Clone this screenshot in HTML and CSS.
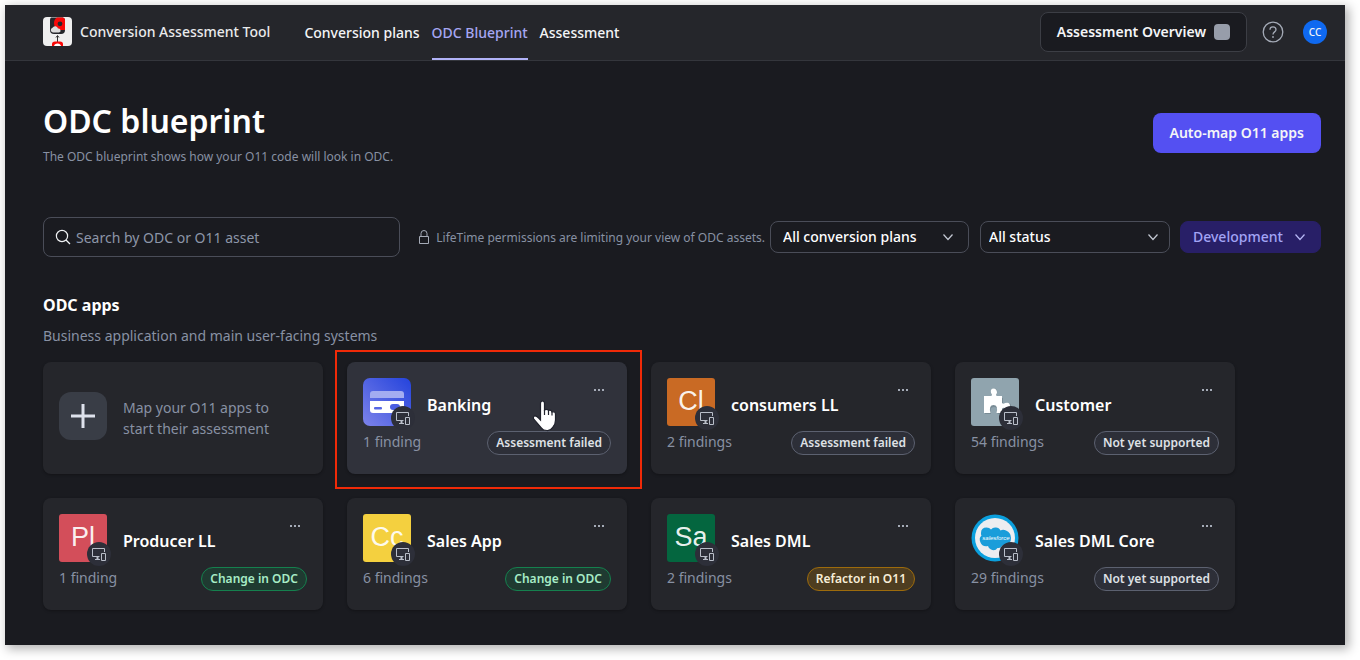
FILE: index.html
```html
<!DOCTYPE html>
<html lang="en">
<head>
<meta charset="utf-8">
<meta name="viewport" content="width=device-width, initial-scale=1">
<title>ODC blueprint</title>
<link rel="stylesheet" href="styles.css">
</head>
<body>
<svg class="sprite" aria-hidden="true">
  <symbol id="devices" viewBox="0 0 24 24">
    <path d="M12.500 14.500H5.500V6.500H17.500V10M8 17.500H13M14.500 11.500H18.500V18.500H14.500Z" fill="none" stroke="#b9bec9" stroke-width="1"/>
    <path d="M9.500 15H11.500V17H9.500Z" fill="#b9bec9"/>
  </symbol>
  <symbol id="chevron" viewBox="0 0 12 12">
    <path d="M1.500 3.500L6 8.500L10.500 3.500" fill="none" stroke="currentColor" stroke-width="1.200"/>
  </symbol>
</svg>
<div class="window">
  <header class="topbar">
    <a class="brand" href="#">
      <svg class="brand-logo" viewBox="0 0 29 29" aria-hidden="true">
        <rect width="29" height="29" rx="4" fill="#efefef"/>
        <path d="M8 .5H20Q22 1 22 3V13Q22 17 18 17H11Q7 17 7 13V3Q7 1 8 .5Z" fill="#25262b"/>
        <path d="M14 .5H20Q22 1 22 3V13H17Q11 12 11 6Q11 2 14 .5Z" fill="#f80808"/>
        <circle cx="17" cy="6.800" r="2.400" fill="#25262b"/>
        <path d="M10 15.500a2.400 2.400 0 0 1-.5-4.700a3 3 0 0 1 5.500 .7a2 2 0 0 1 1 4Z" fill="#dcdcdc"/>
        <path d="M14.500 25V19M13 20.500L14.500 18.500L16 20.500" fill="none" stroke="#333" stroke-width="1"/>
        <path d="M9 29V27Q9 24.500 12 24.500H17Q20 24.500 20 27V29Z" fill="#f80808"/>
        <path d="M11 29Q11.500 26.500 14.500 26.500T18 29Z" fill="#fff"/>
      </svg>
      <span>Conversion Assessment Tool</span>
    </a>
    <nav class="nav">
      <a href="#">Conversion plans</a>
      <a href="#" class="active" aria-current="page">ODC Blueprint</a>
      <a href="#">Assessment</a>
    </nav>
    <div class="tools">
      <button class="overview" type="button">Assessment Overview <span class="overview-mark"></span></button>
      <button class="help" type="button" aria-label="Help">
        <svg viewBox="0 0 22 22" aria-hidden="true">
          <circle cx="11" cy="11" r="9.800" fill="none" stroke="#a5abb7" stroke-width="1.300"/>
          <path d="M8 8.700C8 4.800 14 4.800 14 8.700C14 10.900 11 10.900 11 13.500" fill="none" stroke="#a5abb7" stroke-width="1.300"/>
          <circle cx="11" cy="16" r="0.900" fill="#a5abb7"/>
        </svg>
      </button>
      <button class="avatar" type="button">CC</button>
    </div>
  </header>

  <main class="page">
    <div class="heading">
      <div>
        <h1>ODC blueprint</h1>
        <p class="lead">The ODC blueprint shows how your O11 code will look in ODC.</p>
      </div>
      <button class="primary" type="button">Auto-map O11 apps</button>
    </div>

    <div class="filters">
      <label class="search">
        <svg viewBox="0 0 16 16" aria-hidden="true"><circle cx="7" cy="7" r="5.600" fill="none" stroke="#f1f3f5" stroke-width="1.200"/><path d="M11 11L15 15" stroke="#f1f3f5" stroke-width="1.300"/></svg>
        <input type="text" placeholder="Search by ODC or O11 asset" aria-label="Search by ODC or O11 asset">
      </label>
      <p class="notice">
        <svg viewBox="0 0 12 16" aria-hidden="true"><path d="M1.500 7.500H10.500V14.500H1.500ZM3 7.500V4.500Q3 1.500 6 1.500T9 4.500V7.500" fill="none" stroke="#a5abb7" stroke-width="1"/></svg>
        LifeTime permissions are limiting your view of ODC assets.
      </p>
      <div class="picker picker-plans">
        <select aria-label="Conversion plan"><option>All conversion plans</option></select>
        <svg aria-hidden="true"><use href="#chevron"/></svg>
      </div>
      <div class="picker picker-status">
        <select aria-label="Status"><option>All status</option></select>
        <svg aria-hidden="true"><use href="#chevron"/></svg>
      </div>
      <div class="picker picker-stage">
        <select aria-label="Stage"><option>Development</option></select>
        <svg aria-hidden="true"><use href="#chevron"/></svg>
      </div>
    </div>

    <h2>ODC apps</h2>
    <p class="section-note">Business application and main user-facing systems</p>

    <div class="cards">
      <button class="card card-add" type="button">
        <span class="plus"><svg viewBox="0 0 24 24" aria-hidden="true"><path d="M12 0V24M0 12H24" stroke="#dee2ec" stroke-width="3"/></svg></span>
        <span class="add-text">Map your O11 apps to start their assessment</span>
      </button>

      <article class="card card-hover">
        <div class="card-top">
          <div class="app-icon">
            <svg class="tile" viewBox="0 0 48 48" aria-hidden="true">
              <defs><linearGradient id="bank" x1="0" y1="1" x2="1" y2="0"><stop offset="0" stop-color="#7d83ea"/><stop offset="1" stop-color="#2443dc"/></linearGradient></defs>
              <rect width="48" height="48" rx="7" fill="url(#bank)"/>
              <path d="M7 20V16Q7 13 10 13H38Q41 13 41 16V20Z" fill="#a3acf1"/>
              <path d="M7 23H41V32Q41 35 38 35H10Q7 35 7 32Z" fill="#fff"/>
              <rect x="11" y="29" width="8" height="2.500" rx="1" fill="#5667e4"/>
              <rect x="27" y="26" width="10" height="6" rx="3" fill="#4a5ee2"/>
            </svg>
            <span class="badge"><svg aria-hidden="true"><use href="#devices"/></svg></span>
          </div>
          <h3>Banking</h3>
          <button class="more" type="button" aria-label="More actions for Banking"><i></i><i></i><i></i></button>
        </div>
        <div class="card-bottom"><span>1 finding</span><span class="status">Assessment failed</span></div>
        <span class="callout"></span>
        <svg class="pointer" viewBox="0 0 26 32" aria-hidden="true">
          <path d="M8.500 3.500Q8.500 1 10.500 1T12.500 3.500V10Q15 8.500 16.500 10.500Q19 9.500 20 12Q23.500 11 23.500 14.500V20Q23.500 24 21 27Q18 31 15 30.500Q11 30.500 9.500 28L2 19.500Q.5 17 2.500 16Q4.500 15.500 8.500 20Z" fill="#fff" stroke="#20222c" stroke-width="1.200"/>
          <path d="M12.500 10V15M16.500 10.500V15M20 12V15.500" stroke="#20222c" stroke-width="1.200"/>
        </svg>
      </article>

      <article class="card">
        <div class="card-top">
          <div class="app-icon">
            <span class="tile letters orange">Cl</span>
            <span class="badge"><svg aria-hidden="true"><use href="#devices"/></svg></span>
          </div>
          <h3>consumers LL</h3>
          <button class="more" type="button" aria-label="More actions for consumers LL"><i></i><i></i><i></i></button>
        </div>
        <div class="card-bottom"><span>2 findings</span><span class="status">Assessment failed</span></div>
      </article>

      <article class="card">
        <div class="card-top">
          <div class="app-icon">
            <svg class="tile" viewBox="0 0 48 48" aria-hidden="true">
              <rect width="48" height="48" rx="3" fill="#90a4ae"/>
              <path d="M14 20H20.500Q21.500 17 20 15.500Q19 10.500 23 10.500T26 15.500Q24.500 17 25.500 20H32V26Q33 27.500 35 25.500Q40 24 40 28T35 31Q33 29.500 32 31V36H26.500Q28 29 23 29T20 36H14Z" fill="#788b95"/>
              <path d="M13 18H20.500Q21.500 16.500 20 15Q19 10.500 22.500 10.500T26 15Q24.500 16.500 25.500 18H31V25Q32.500 26.500 34 25Q39 23.500 39 28T34 30.500Q32 29 31 31V35H25.500Q27.500 27 22.500 27T19.500 35H13Z" fill="#fff"/>
            </svg>
            <span class="badge"><svg aria-hidden="true"><use href="#devices"/></svg></span>
          </div>
          <h3>Customer</h3>
          <button class="more" type="button" aria-label="More actions for Customer"><i></i><i></i><i></i></button>
        </div>
        <div class="card-bottom"><span>54 findings</span><span class="status">Not yet supported</span></div>
      </article>

      <article class="card">
        <div class="card-top">
          <div class="app-icon">
            <span class="tile letters red">Pl</span>
            <span class="badge"><svg aria-hidden="true"><use href="#devices"/></svg></span>
          </div>
          <h3>Producer LL</h3>
          <button class="more" type="button" aria-label="More actions for Producer LL"><i></i><i></i><i></i></button>
        </div>
        <div class="card-bottom"><span>1 finding</span><span class="status status-change">Change in ODC</span></div>
      </article>

      <article class="card">
        <div class="card-top">
          <div class="app-icon">
            <span class="tile letters yellow">Cc</span>
            <span class="badge"><svg aria-hidden="true"><use href="#devices"/></svg></span>
          </div>
          <h3>Sales App</h3>
          <button class="more" type="button" aria-label="More actions for Sales App"><i></i><i></i><i></i></button>
        </div>
        <div class="card-bottom"><span>6 findings</span><span class="status status-change">Change in ODC</span></div>
      </article>

      <article class="card">
        <div class="card-top">
          <div class="app-icon">
            <span class="tile letters green">Sa</span>
            <span class="badge"><svg aria-hidden="true"><use href="#devices"/></svg></span>
          </div>
          <h3>Sales DML</h3>
          <button class="more" type="button" aria-label="More actions for Sales DML"><i></i><i></i><i></i></button>
        </div>
        <div class="card-bottom"><span>2 findings</span><span class="status status-refactor">Refactor in O11</span></div>
      </article>

      <article class="card">
        <div class="card-top">
          <div class="app-icon">
            <svg class="tile" viewBox="0 0 48 48" aria-hidden="true">
              <circle cx="24" cy="24" r="23.500" fill="#0b9fdd"/>
              <circle cx="24" cy="24" r="20" fill="#ededf0"/>
              <path d="M10 19Q10 13.500 15.500 13.500Q18.500 13.500 20 15.500Q22 13 25 13.500Q28 13.500 29.500 16.500Q32 15 35 16.500Q40 18.500 40 24T35 31Q33.500 32 31.500 31.500Q30 34.500 26.500 34Q24 37.500 20 35.500Q17.500 34.500 17 32Q11 33 9.500 28.500Q7.500 24 10.500 21.500Q9.800 20.500 10 19Z" fill="#1a9dda"/>
              <text x="25" y="26" text-anchor="middle" class="cloud-text">salesforce</text>
            </svg>
            <span class="badge"><svg aria-hidden="true"><use href="#devices"/></svg></span>
          </div>
          <h3>Sales DML Core</h3>
          <button class="more" type="button" aria-label="More actions for Sales DML Core"><i></i><i></i><i></i></button>
        </div>
        <div class="card-bottom"><span>29 findings</span><span class="status">Not yet supported</span></div>
      </article>
    </div>
  </main>
</div>
</body>
</html>
```
FILE: styles.css
```css
* { box-sizing: border-box; }

body {
  margin: 0;
  padding: 5px 15px 15px 5px;
  background: #fff;
  color: #f4f5f7;
  font: 14px/21px "Noto Sans", sans-serif;
}

h1, h2, h3, p { margin: 0; }
a { color: inherit; text-decoration: none; }
button, input, select { font: inherit; color: inherit; }
button { border: 0; padding: 0; background: none; cursor: pointer; }
svg { display: block; flex: none; }
.sprite { position: absolute; width: 0; height: 0; }

.window {
  min-height: calc(100vh - 20px);
  background: #1a1b20;
  box-shadow: 3px 3px 10px 1px rgba(0, 0, 0, 0.3);
}

/* Top bar */
.topbar {
  display: flex;
  align-items: stretch;
  height: 56px;
  padding: 0 18px 0 38px;
  border-bottom: 1px solid #34363c;
  background: #25262b;
  font-weight: 500;
}
.brand { display: flex; align-items: center; gap: 8px; margin-right: 34px; padding-bottom: 2px; color: #e9eaec; }
.brand-logo { width: 29px; height: 29px; }
.nav { display: flex; gap: 12px; }
.nav a { display: flex; align-items: center; border-bottom: 2px solid transparent; border-top: 2px solid transparent; }
.nav .active { color: #a6a7f3; border-bottom-color: #b1b2f7; }
.tools { display: flex; align-items: center; margin-left: auto; padding-bottom: 2px; }
.overview {
  display: flex;
  align-items: center;
  gap: 8px;
  height: 40px;
  padding: 0 16px;
  border: 1px solid #3c3e45;
  border-radius: 8px;
  background: #1a1b20;
  font-weight: 600;
}
.overview-mark { width: 16px; height: 16px; border-radius: 4px; background: #979daa; }
.help { width: 22px; height: 22px; margin: 0 19px 0 15px; }
.avatar { width: 24px; height: 24px; border-radius: 50%; background: #0f69f0; font-size: 10px; line-height: 24px; font-weight: 500; }

/* Page */
.page { padding: 36px 24px 35px 38px; }
.heading { display: flex; justify-content: space-between; align-items: center; }
h1 { font-size: 32px; line-height: 48px; font-weight: 600; color: #fff; }
.lead { font-size: 12px; line-height: 24px; color: #8891a3; }
.primary {
  height: 40px;
  padding: 0 17px 2px;
  border-radius: 8px;
  background: #5450f2;
  font-weight: 600;
}

.filters { display: flex; align-items: center; margin: 48px 0 36px; }
.search {
  display: flex;
  align-items: center;
  flex: 1;
  gap: 5px;
  height: 40px;
  padding: 0 11px;
  border: 1px solid #4a4d58;
  border-radius: 8px;
}
.search svg { width: 16px; height: 16px; }
.search input { flex: 1; min-width: 0; padding: 0; border: 0; outline: 0; background: none; }
.search input::placeholder { color: #8d96a8; opacity: 1; }
.notice { display: flex; align-items: center; gap: 6px; margin: 0 5px 0 18px; font-size: 12px; color: #8891a3; white-space: nowrap; }
.notice svg { width: 12px; height: 16px; }
.picker { position: relative; height: 32px; font-weight: 500; }
.picker select {
  appearance: none;
  width: 100%;
  height: 100%;
  padding: 0 12px 2px;
  border: 1px solid #4a4d58;
  border-radius: 8px;
  background: #1a1b20;
  color: #fff;
}
.picker svg { position: absolute; right: 15px; top: 10px; width: 12px; height: 12px; color: #c3c8d2; pointer-events: none; }
.picker-plans { width: 199px; margin-right: 11px; }
.picker-status { width: 190px; margin-right: 10px; }
.picker-status select { padding: 0 8px 2px; }
.picker-status svg { right: 11px; }
.picker-stage { width: 141px; }
.picker-stage select { border-color: #281f67; background: #281f67; color: #a3a4f5; }
.picker-stage svg { color: #b7b8f6; }

h2 { font-size: 16px; line-height: 24px; font-weight: 700; color: #fff; }
.section-note { margin: 8px 0 16px; color: #8891a3; }

/* Cards */
.cards { display: grid; grid-template-columns: repeat(auto-fill, 280px); gap: 24px; }
.card {
  position: relative;
  min-height: 112px;
  padding: 16px;
  border-radius: 8px;
  background: #25262b;
  box-shadow: 0 1px 3px rgba(0, 0, 0, 0.3);
}
.card-hover { background: #30323b; }
.card-add { display: flex; align-items: flex-start; gap: 16px; padding: 30px 16px; text-align: left; color: #8891a3; }
.plus { display: grid; place-items: center; flex: none; width: 48px; height: 48px; border-radius: 12px; background: #393d46; }
.plus svg { width: 24px; height: 24px; }
.add-text { max-width: 160px; padding-top: 5px; }

.card-top { display: flex; align-items: flex-start; gap: 16px; }
.app-icon { position: relative; flex: none; width: 48px; height: 48px; }
.tile { display: block; width: 48px; height: 48px; }
.letters {
  border-radius: 3px;
  font: 27px/46px "Liberation Sans", sans-serif;
  text-align: center;
  color: rgba(255, 255, 255, 0.92);
}
.orange { background: #c96a24; }
.red { background: #d34e5a; }
.yellow { background: #f4d03f; }
.green { background: #04663f; }
.cloud-text { font: italic 6px "Liberation Sans", sans-serif; fill: #fff; }
.badge {
  position: absolute;
  right: -4px;
  bottom: -4px;
  width: 24px;
  height: 24px;
  border-radius: 50%;
  background: #2d2f39;
}
.badge svg { width: 24px; height: 24px; }
h3 { flex: 1; padding-top: 15px; font-size: 16px; line-height: 24px; font-weight: 600; color: #fff; }
.more { display: flex; align-items: center; justify-content: center; gap: 2px; width: 24px; height: 24px; }
.more i { width: 2px; height: 2px; background: #a5abb7; }
.card-bottom { display: flex; justify-content: space-between; align-items: flex-start; margin-top: 5px; color: #8891a3; }
.status {
  padding: 0 8px;
  border: 1px solid #5c6170;
  border-radius: 12px;
  background: #2d2f38;
  color: #dfe1e6;
  font-size: 12px;
  line-height: 22px;
  font-weight: 600;
}
.status-change { border-color: #15804e; background: #1f3a31; color: #a7ecc6; }
.status-refactor { border-color: #9d6b0c; background: #4e3d20; color: #f8eed8; }

.callout { position: absolute; inset: -12px -15px -15px -12px; border: 2px solid #f02a08; pointer-events: none; }
.pointer { position: absolute; left: 185px; top: 38px; width: 26px; height: 32px; pointer-events: none; }
```
